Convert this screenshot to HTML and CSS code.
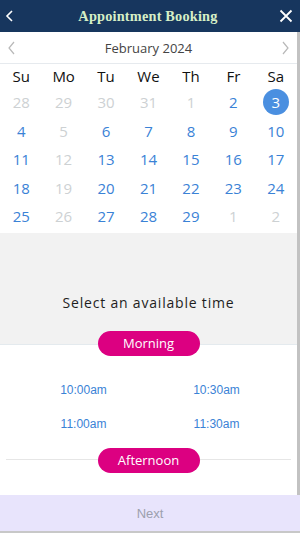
FILE: index.html
```html
<!DOCTYPE html>
<html lang="en">
<head>
  <meta charset="UTF-8" />
  <meta name="viewport" content="width=device-width, initial-scale=1.0"/>
  <title>Appointment Booking</title>
  <link rel="stylesheet" href="styles.css">
</head>
<body>
  <div class="app">
    <div class="topbar">
      <svg class="top-icon" width="14" height="14" viewBox="0 0 14 14"><path d="M9 2 L4 7 L9 12" fill="none" stroke="#fff" stroke-width="1.6"/></svg>
      <div class="title">Appointment Booking</div>
      <svg class="top-icon" width="14" height="14" viewBox="0 0 14 14"><path d="M1.5 1.5 L12.5 12.5 M12.5 1.5 L1.5 12.5" fill="none" stroke="#fff" stroke-width="1.8"/></svg>
    </div>

    <div class="main">
      <div class="month-row">
        <svg width="10" height="14" viewBox="0 0 10 14"><path d="M7 1 L2 7 L7 13" fill="none" stroke="#b8b8b8" stroke-width="1.2"/></svg>
        <div class="month">February 2024</div>
        <svg width="10" height="14" viewBox="0 0 10 14"><path d="M3 1 L8 7 L3 13" fill="none" stroke="#b8b8b8" stroke-width="1.2"/></svg>
      </div>

      <div class="calendar">
        <div class="dow">Su</div><div class="dow">Mo</div><div class="dow">Tu</div><div class="dow">We</div><div class="dow">Th</div><div class="dow">Fr</div><div class="dow">Sa</div>

        <div class="day off">28</div><div class="day off">29</div><div class="day off">30</div><div class="day off">31</div><div class="day off">1</div><div class="day">2</div><div class="day"><span class="picked">3</span></div>
        <div class="day">4</div><div class="day off">5</div><div class="day">6</div><div class="day">7</div><div class="day">8</div><div class="day">9</div><div class="day">10</div>
        <div class="day">11</div><div class="day off">12</div><div class="day">13</div><div class="day">14</div><div class="day">15</div><div class="day">16</div><div class="day">17</div>
        <div class="day">18</div><div class="day off">19</div><div class="day">20</div><div class="day">21</div><div class="day">22</div><div class="day">23</div><div class="day">24</div>
        <div class="day">25</div><div class="day off">26</div><div class="day">27</div><div class="day">28</div><div class="day">29</div><div class="day off">1</div><div class="day off">2</div>
      </div>

      <div class="time-head">
        <div class="prompt">Select an available time</div>
      </div>

      <div class="pill-row morning-row">
        <div class="pill">Morning</div>
      </div>

      <div class="slots">
        <div class="slot">10:00am</div>
        <div class="slot">10:30am</div>
        <div class="slot">11:00am</div>
        <div class="slot">11:30am</div>
      </div>

      <div class="pill-row afternoon-row">
        <div class="pill">Afternoon</div>
      </div>
    </div>

    <div class="next-bar">Next</div>
  </div>
</body>
</html>
```

FILE: styles.css
```css
body {
  margin: 0;
  padding: 0;
  font-family: 'Open Sans', sans-serif;
  background: white;
}

.app {
  width: 300px;
  height: 533px;
  display: flex;
  flex-direction: column;
  overflow: hidden;
}

.topbar {
  height: 32px;
  flex-shrink: 0;
  background: #17365e;
  display: flex;
  align-items: center;
  justify-content: space-between;
  padding: 0 7px 0 3px;
}

.top-icon {
  display: block;
}

.title {
  font-family: 'Liberation Serif', serif;
  font-weight: bold;
  font-size: 14.3px;
  color: #d6efc6;
  letter-spacing: 0.2px;
}

.main {
  flex: 1;
  border-right: 3px solid #c2c2c2;
  overflow: hidden;
}

.month-row {
  height: 31px;
  border-bottom: 1px solid #e6eaee;
  display: flex;
  align-items: center;
  justify-content: space-between;
  padding: 0 7px;
}

.month-row svg {
  display: block;
}

.month {
  font-size: 13px;
  color: #444;
}

.calendar {
  display: grid;
  grid-template-columns: repeat(7, 1fr);
  grid-auto-rows: 28.5px;
  grid-template-rows: 24px;
  padding-bottom: 2px;
}

.dow {
  font-size: 15px;
  color: #111;
  text-align: center;
  line-height: 24px;
}

.day {
  font-size: 15px;
  color: #3a82d6;
  display: flex;
  align-items: center;
  justify-content: center;
}

.day.off {
  color: #cdd1d3;
}

.picked {
  width: 26px;
  height: 26px;
  border-radius: 50%;
  background: #4a8fe0;
  color: white;
  display: flex;
  align-items: center;
  justify-content: center;
}

.time-head {
  background: #f2f2f2;
  padding: 60px 0 18px;
  text-align: center;
}

.prompt {
  font-size: 14px;
  line-height: 20px;
  letter-spacing: 0.8px;
  color: #1e1e1e;
}

.pill-row {
  display: flex;
  justify-content: center;
}

.morning-row {
  background: linear-gradient(#f2f2f2 0, #f2f2f2 13px, #e4eaee 13px, #e4eaee 14px, #fff 14px);
}

.afternoon-row {
  margin: 7px 6px 0;
  background: linear-gradient(transparent 11px, #e6e6e6 11px, #e6e6e6 12px, transparent 12px);
}

.pill {
  width: 102px;
  height: 25px;
  border-radius: 13px;
  background: #dc0081;
  color: white;
  font-size: 13px;
  display: flex;
  align-items: center;
  justify-content: center;
}

.slots {
  display: grid;
  grid-template-columns: 133px 133px;
  grid-auto-rows: 34px;
  padding: 17px 0 0 17px;
}

.slot {
  font-family: 'Liberation Sans', sans-serif;
  font-size: 12px;
  color: #3a82d6;
  text-align: center;
  line-height: 34px;
}

.next-bar {
  height: 36px;
  flex-shrink: 0;
  background: #e8e4fc;
  border-bottom: 2px solid #c8c8c8;
  font-family: 'Liberation Sans', sans-serif;
  font-size: 13px;
  color: #9ca0ae;
  display: flex;
  align-items: center;
  justify-content: center;
}
```
